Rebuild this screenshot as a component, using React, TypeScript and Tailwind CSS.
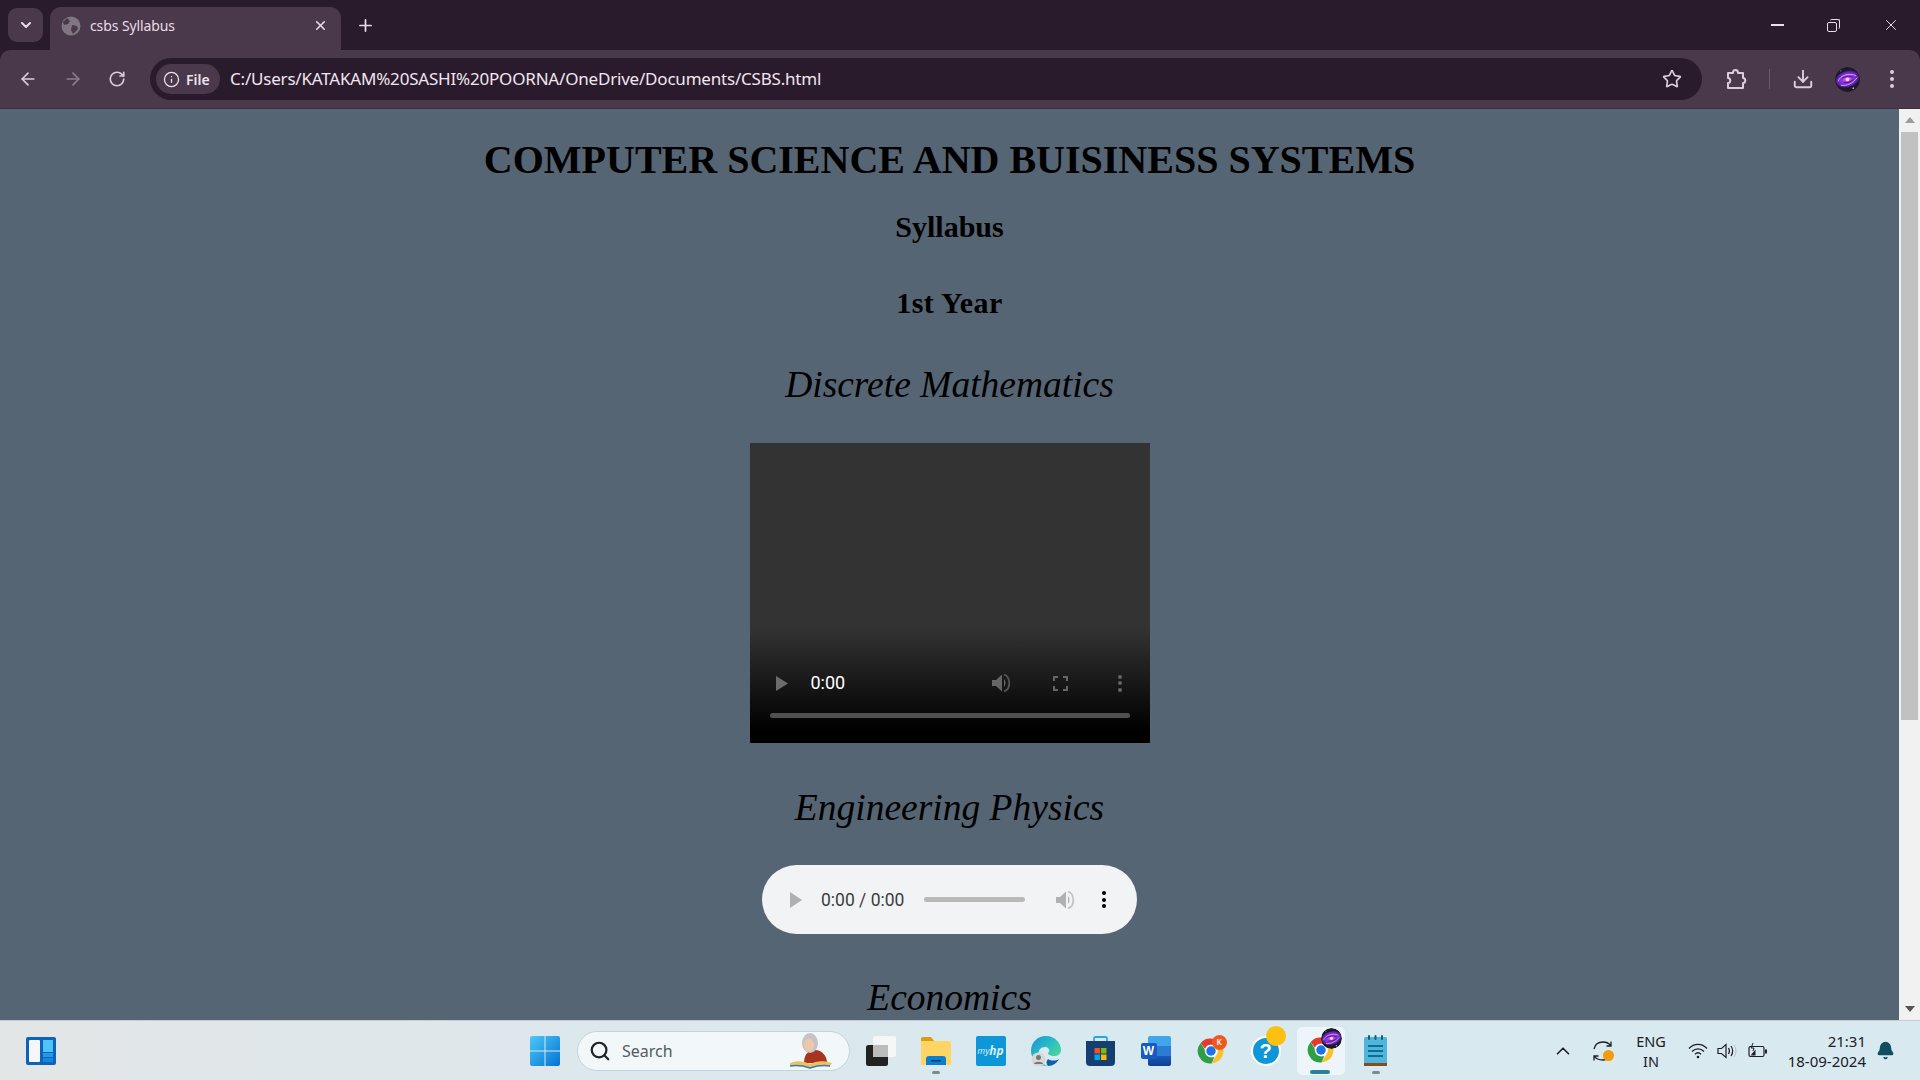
import React from "react";
import { ChevronDown, X, Plus, ArrowLeft, ArrowRight, RotateCw, Info, Star, Download, Search, ChevronUp, Bell } from "lucide-react";

function Galaxy({ size }: { size: number }) {
  return (
    <svg width={size} height={size} viewBox="0 0 26 26">
      <defs>
        <radialGradient id={"gx" + size} cx="50%" cy="50%" r="50%">
          <stop offset="0%" stopColor="#f4a3d6" />
          <stop offset="30%" stopColor="#a944ee" />
          <stop offset="80%" stopColor="#6a24c4" />
          <stop offset="100%" stopColor="#3a1c66" />
        </radialGradient>
      </defs>
      <circle cx="13" cy="13" r="13" fill="#1b1a26" />
      <ellipse cx="13" cy="12.500" rx="12.500" ry="8.500" transform="rotate(-15 13 13)" fill={"url(#gx" + size + ")"} />
      <path d="M3 15c3-7 12-9 19-6M6 19c6 1 13-2 17-8" stroke="#d9a2f8" strokeWidth="1" fill="none" />
      <path d="M7 12c3-2 8-3 12-1M9 16c3 1 7 0 10-3" stroke="#3d1480" strokeWidth="1" fill="none" />
      <circle cx="13" cy="13" r="1.800" fill="#ffd3ec" />
      <circle cx="6" cy="4" r=".7" fill="#8d8db0" />
      <circle cx="19" cy="22" r=".9" fill="#9fc0b0" />
    </svg>
  );
}

function Chrome() {
  return (
    <svg width="30" height="30" viewBox="0 0 48 48">
      <path d="M24 4a20 20 0 0 1 17.300 10H24a10 10 0 0 0-9.400 6.600L7.600 11A20 20 0 0 1 24 4z" fill="#e33b2e" />
      <path d="M41.300 14A20 20 0 0 1 25 44l8.600-15A10 10 0 0 0 32 16.500V14z" fill="#fbc02d" />
      <path d="M7.600 11l8.700 15a10 10 0 0 0 13 7.400l-4.400 10.500A20 20 0 0 1 7.600 11z" fill="#2f9e44" />
      <circle cx="24" cy="24" r="10" fill="#fff" />
      <circle cx="24" cy="24" r="7.600" fill="#1a73e8" />
    </svg>
  );
}

function Slot({ children, active, dot }: { children: React.ReactNode; active?: boolean; dot?: boolean }) {
  return (
    <div className="relative flex h-[48px] w-[55px] shrink-0 items-center justify-center">
      {active && <div className="absolute inset-y-0 left-[4px] right-[3px] rounded-[5px] bg-[#edf5fa]" />}
      {children}
      {dot && <div className="absolute bottom-[1px] left-[24px] h-[3px] w-[8px] rounded-full bg-[#7f8a90]" />}
      {active && <div className="absolute bottom-[1px] left-[17px] h-[4px] w-[20px] rounded-full bg-[#2b8296]" />}
    </div>
  );
}

function VolumeIcon({ color, wave }: { color: string; wave: string }) {
  return (
    <svg width="22" height="22" viewBox="0 0 22 22">
      <path d="M2 8h4l6-5.500v17L6 14H2z" fill={color} />
      <path d="M14 7c2 2 2 6 0 8z" fill={color} />
      <path d="M14 2.600c6 1.600 8 13.800 0 16.800" stroke={wave} strokeWidth="1.800" fill="none" />
    </svg>
  );
}

function MediaDots({ color }: { color: string }) {
  return (
    <div className="flex h-[17px] flex-col justify-between">
      <div className={"h-[4px] w-[4px] rounded-full " + color} />
      <div className={"h-[4px] w-[4px] rounded-full " + color} />
      <div className={"h-[4px] w-[4px] rounded-full " + color} />
    </div>
  );
}

function Heading({ children, cls }: { children: React.ReactNode; cls: string }) {
  return <div className={"text-center text-black " + cls}>{children}</div>;
}

export default function App() {
  const ui = "font-['Noto_Sans',sans-serif]";
  return (
    <div className={"flex h-[1080px] w-[1920px] flex-col overflow-hidden bg-[#2a1b2c] " + ui}>
      {/* tab strip */}
      <div className="flex h-[50px] shrink-0 items-end bg-[#2a1b2c] pl-[8px] text-[#e8dbe8]">
        <div className="mb-[8px] flex h-[34px] w-[35px] items-center justify-center rounded-[9px] bg-[#4a394a]">
          <ChevronDown size={16} strokeWidth={3} />
        </div>
        <div className="ml-[7px] flex h-[43px] w-[291px] items-center rounded-t-[11px] bg-[#4a394a] pb-[6px] pl-[11px] pr-[13px]">
          <svg width="20" height="20" viewBox="0 0 20 20">
            <circle cx="10" cy="10" r="9.500" fill="#7f7680" />
            <path d="M6 2l3 3-2 3-4 1-1-3zM11 9l5 1 1 3-5 5-2-4z" fill="#4a394a" />
          </svg>
          <span className="ml-[9px] flex-1 text-[14px] tracking-[-0.1px]">csbs Syllabus</span>
          <X size={15} strokeWidth={2.6} />
        </div>
        <div className="mb-[15px] ml-[14px] flex w-[20px] items-center justify-center">
          <Plus size={19} strokeWidth={2.2} />
        </div>
        <div className="ml-auto mb-[16px] flex items-center pr-[20px] text-white">
          <div className="h-[1.500px] w-[13px] bg-[#e8e0e8]" />
          <div className="relative ml-[43px] h-[13px] w-[13px]">
            <div className="absolute left-[3px] top-0 h-[10px] w-[10px] rounded-[2px] border-t border-r border-[#e8e0e8]" />
            <div className="absolute bottom-0 left-0 h-[10px] w-[10px] rounded-[2px] border border-[#e8e0e8]" />
          </div>
          <X className="ml-[42px] text-[#e8e0e8]" size={18} strokeWidth={1.300} />
        </div>
      </div>

      {/* toolbar */}
      <div className="flex h-[59px] shrink-0 items-center rounded-t-[10px] border-b border-[#3c2e3d] bg-[#4a394a] text-[#dccbdc]">
        <ArrowLeft className="ml-[18px]" size={20} strokeWidth={2} />
        <ArrowRight className="ml-[25px] text-[#8c7c8c]" size={20} strokeWidth={2} />
        <RotateCw className="ml-[25px]" size={18} strokeWidth={2.2} />
        <div className="ml-[24px] flex h-[42px] w-[1552px] items-center rounded-full bg-[#2a1b2c] pl-[6px] pr-[20px]">
          <div className="flex h-[30px] w-[64px] items-center rounded-full bg-[#4a394a] pl-[7px] text-[#eee2ee]">
            <Info size={17} strokeWidth={1.800} />
            <span className="ml-[6px] text-[14px] font-semibold">File</span>
          </div>
          <span className="ml-[10px] flex-1 text-[17px] tracking-[-0.2px] text-[#f0e6f0]">C:/Users/KATAKAM%20SASHI%20POORNA/OneDrive/Documents/CSBS.html</span>
          <Star size={20} strokeWidth={2} />
        </div>
        <svg className="ml-[23px]" width="22" height="22" viewBox="0 0 22 22" fill="none" stroke="#dccbdc" strokeWidth="2">
          <path d="M3 5h5c0-4 5-4 5 0h5v5c3 0 3 5 0 5v5H3v-5c3 0 3-5 0-5z" strokeLinejoin="round" />
        </svg>
        <div className="ml-[22px] h-[20px] w-[1px] bg-[#6b5a6b]" />
        <Download className="ml-[22px]" size={22} strokeWidth={2.100} />
        <div className="ml-[21px] flex h-[25px] w-[25px] overflow-hidden rounded-full">
          <Galaxy size={25} />
        </div>
        <div className="ml-[30px] flex h-[18px] flex-col justify-between">
          <div className="h-[4px] w-[4px] rounded-full bg-[#dccbdc]" />
          <div className="h-[4px] w-[4px] rounded-full bg-[#dccbdc]" />
          <div className="h-[4px] w-[4px] rounded-full bg-[#dccbdc]" />
        </div>
      </div>

      {/* page */}
      <div className="flex h-[911px] shrink-0 bg-[#566573]">
        <main className="flex-1 overflow-hidden font-['Liberation_Serif',serif]">
          <Heading cls="mt-[28px] text-[40px] font-bold leading-[46px]">COMPUTER SCIENCE AND BUISINESS SYSTEMS</Heading>
          <Heading cls="mt-[27px] text-[30px] font-bold leading-[34px]">Syllabus</Heading>
          <Heading cls="mt-[42px] text-[30px] font-bold leading-[34px] tracking-[0.45px]">1st Year</Heading>
          <Heading cls="mt-[43px] text-[37.500px] italic leading-[43px]">Discrete Mathematics</Heading>

          <div className="relative mx-auto mt-[37px] h-[300px] w-[400px] bg-[linear-gradient(to_bottom,#333333_0,#333333_185px,#000000_288px)] font-['Roboto',sans-serif]">
            <div className="absolute inset-x-[20px] top-[230px] flex h-[20px] items-center">
              <svg className="ml-[5px]" width="14" height="15" viewBox="0 0 14 15"><path d="M1 0l12 7.500L1 15z" fill="#6b6b6b" /></svg>
              <span className="ml-[22px] w-[177px] text-[18px] leading-[20px] text-white">0:00</span>
              <div className="ml-[2px]"><VolumeIcon color="#666666" wave="#555555" /></div>
              <svg className="ml-[41px]" width="15" height="15" viewBox="0 0 15 15" fill="none" stroke="#666666" strokeWidth="2"><path d="M1 5V1h4M10 1h4v4M14 10v4h-4M5 14H1v-4" /></svg>
              <div className="ml-[50px]"><MediaDots color="bg-[#666666]" /></div>
            </div>
            <div className="absolute inset-x-[20px] top-[270px] h-[5px] rounded-full bg-[#505050]" />
          </div>

          <Heading cls="mt-[43px] text-[37.500px] italic leading-[43px]">Engineering Physics</Heading>

          <div className="mx-auto mt-[36px] flex h-[69px] w-[375px] items-center rounded-full bg-[#f1f3f4] pl-[28px] font-['Roboto',sans-serif]">
            <svg width="12" height="16" viewBox="0 0 12 16"><path d="M0 0l12 8-12 8z" fill="#aeb0b1" /></svg>
            <span className="ml-[19px] w-[103px] text-[17.500px] leading-[20px] text-[#3b3d3f]">0:00 / 0:00</span>
            <div className="h-[5px] w-[101px] rounded-full bg-[#b9b9b9]" />
            <div className="ml-[29px]"><VolumeIcon color="#b0b1b2" wave="#c4c5c6" /></div>
            <div className="ml-[26px]"><MediaDots color="bg-black" /></div>
          </div>

          <Heading cls="mt-[42px] text-[37.500px] italic leading-[43px]">Economics</Heading>
        </main>

        <div className="flex w-[21px] shrink-0 flex-col items-center bg-[#f1f1f1]">
          <svg className="mt-[8px]" width="10" height="6" viewBox="0 0 10 6"><path d="M0 6l5-6 5 6z" fill="#9b9b9b" /></svg>
          <div className="mt-[9px] h-[588px] w-[17px] bg-[#c1c1c1]" />
          <svg className="mt-auto mb-[8px]" width="10" height="6" viewBox="0 0 10 6"><path d="M0 0l5 6 5-6z" fill="#555555" /></svg>
        </div>
      </div>

      {/* taskbar */}
      <div className="flex h-[60px] shrink-0 items-center border-t border-[#c5cbcf] bg-[linear-gradient(to_right,#e3e6e7,#dde8ec_30%,#d8e9f0_60%,#d8e9f0)] text-[#1c2024]">
        <svg className="ml-[26px]" width="30" height="28" viewBox="0 0 30 28">
          <rect width="30" height="28" rx="2" fill="#0e62b8" />
          <rect x="3" y="3" width="11" height="22" rx="1" fill="#f4f6f7" />
          <rect x="17" y="3" width="10" height="12" fill="#4fc3f7" />
          <rect x="17" y="16" width="10" height="4" fill="#1f9be8" />
          <rect x="17" y="21" width="10" height="4" fill="#1087e0" />
        </svg>

        <svg className="ml-[474px]" width="30" height="30" viewBox="0 0 30 30">
          <defs>
            <linearGradient id="w" x1="0" y1="0" x2="1" y2="1">
              <stop offset="0" stopColor="#4cc8f8" />
              <stop offset="1" stopColor="#0473d3" />
            </linearGradient>
          </defs>
          <path d="M0 2a2 2 0 0 1 2-2h12.500v14.500H0zM15.500 0H28a2 2 0 0 1 2 2v12.500H15.500zM0 15.500h14.500V30H2a2 2 0 0 1-2-2zM15.500 15.500H30V28a2 2 0 0 1-2 2H15.500z" fill="url(#w)" />
        </svg>

        <div className="ml-[17px] flex h-[40px] w-[273px] shrink-0 items-center rounded-full border border-[#c2d3dc] bg-[#f2f7fa] pl-[11px]">
          <Search size={22} strokeWidth={2.400} className="text-[#1f2327]" />
          <span className="ml-[11px] flex-1 text-[16px] text-[#555a5e]">Search</span>
          <svg className="mr-[15px]" width="46" height="36" viewBox="0 0 46 36">
            <path d="M16 30c0-8 4-13 11-13s12 6 12 13z" fill="#a8331f" />
            <ellipse cx="22" cy="10" rx="8" ry="10" fill="#c4c4c8" />
            <ellipse cx="21" cy="12" rx="5" ry="6.500" fill="#ecc8a8" />
            <path d="M2 30c8-3 14-2 20 1 6-3 13-4 22-1l-2 3c-7-1-14 0-20 2-6-2-13-3-20-2z" fill="#f0c060" />
            <path d="M2 33c7-1 14 0 20 2 6-2 13-3 20-2" stroke="#2e7fb5" strokeWidth="1.500" fill="none" />
          </svg>
        </div>

        <div className="ml-[3px] flex items-center">
          <Slot>
            <svg width="30" height="30" viewBox="0 0 30 30">
              <rect x="0" y="9" width="22" height="21" rx="2.500" fill="#222222" />
              <rect x="7" y="0" width="23" height="21" rx="2" fill="#f4f6f7" />
              <rect x="7" y="9" width="15" height="12" fill="#bcbcbc" />
            </svg>
          </Slot>
          <Slot dot>
            <svg width="30" height="28" viewBox="0 0 30 28">
              <path d="M0 2a2 2 0 0 1 2-2h8l3 4h-13z" fill="#d99e0b" />
              <path d="M0 4h28a2 2 0 0 1 2 2v22H0z" fill="#fcd564" />
              <path d="M5 28v-6a3 3 0 0 1 3-3h14a3 3 0 0 1 3 3v6z" fill="#0a7fd1" />
              <rect x="10" y="23" width="10" height="1.500" fill="#063f6e" />
            </svg>
          </Slot>
          <Slot>
            <div className="flex h-[30px] w-[30px] items-center justify-center whitespace-nowrap rounded-[2px] bg-[#0d96d8] text-[9px] italic leading-none text-[#d8f0fa]">
              my<span className="text-[12px] font-bold">hp</span>
            </div>
          </Slot>
          <Slot>
            <svg width="30" height="30" viewBox="0 0 30 30">
              <defs>
                <linearGradient id="e" x1="0" y1="0" x2="1" y2="1">
                  <stop offset="0" stopColor="#1b8ed8" />
                  <stop offset=".5" stopColor="#2cc3c0" />
                  <stop offset="1" stopColor="#6fe07a" />
                </linearGradient>
              </defs>
              <path d="M0 15C0 6 7 0 15 0c9 0 15 7 15 14 0 4-3 6-7 6-3 0-6-1-6-3 2-1 2-6-3-6-6 0-8 6-5 12 1 3 4 6 8 7C8 31 0 24 0 15z" fill="url(#e)" />
              <path d="M17 30c5 0 9-3 11-7-3 2-8 2-11 0-2 2-2 5 0 7z" fill="#0f5fa8" />
              <circle cx="7.500" cy="23.500" r="7" fill="#d7d7d7" />
              <circle cx="7.500" cy="21.500" r="2.500" fill="#777777" />
              <path d="M2.800 28c1-3 8.400-3 9.400 0z" fill="#777777" />
            </svg>
          </Slot>
          <Slot>
            <svg width="29" height="30" viewBox="0 0 29 30">
              <path d="M8 6V2.500A1.500 1.500 0 0 1 9.500 1h10A1.500 1.500 0 0 1 21 2.500V6" stroke="#2aa6e8" strokeWidth="1.800" fill="none" />
              <path d="M0 5h29v21a4 4 0 0 1-4 4H4a4 4 0 0 1-4-4z" fill="#143f70" />
              <rect x="8.500" y="12" width="5.500" height="5.500" fill="#f25022" />
              <rect x="15" y="12" width="5.500" height="5.500" fill="#7fba00" />
              <rect x="8.500" y="18.500" width="5.500" height="5.500" fill="#00a4ef" />
              <rect x="15" y="18.500" width="5.500" height="5.500" fill="#ffb900" />
            </svg>
          </Slot>
          <Slot>
            <div className="relative h-[30px] w-[30px]">
              <div className="absolute right-0 top-0 h-[30px] w-[23px] rounded-[2px] bg-[linear-gradient(to_bottom,#41a5ee_0,#41a5ee_33%,#2b7cd3_33%,#2b7cd3_66%,#185abd_66%,#103f91_100%)]" />
              <div className="absolute left-0 top-[7px] flex h-[16px] w-[16px] items-center justify-center rounded-[2px] bg-[#185abd] font-['Liberation_Sans',sans-serif] text-[12px] font-bold leading-none text-white">W</div>
            </div>
          </Slot>
          <Slot>
            <div className="relative h-[30px] w-[30px]">
              <Chrome />
              <div className="absolute -right-[1px] -top-[1px] flex h-[15px] w-[15px] items-center justify-center rounded-full bg-[#ee5a1e] text-[8px] font-semibold leading-none text-white">K</div>
            </div>
          </Slot>
          <Slot>
            <div className="relative flex h-[30px] w-[30px] items-center justify-center rounded-full border-[2px] border-white bg-[#0f96d8] font-['Liberation_Sans',sans-serif] text-[20px] font-bold leading-none text-white">
              ?
              <div className="absolute -right-[7px] -top-[12px] h-[20px] w-[20px] rounded-full bg-[#fdc010]" />
            </div>
          </Slot>
          <Slot active>
            <div className="relative -mt-[2px] h-[30px] w-[30px]">
              <Chrome />
              <div className="absolute -right-[6px] -top-[7px] h-[21px] w-[21px] overflow-hidden rounded-full"><Galaxy size={21} /></div>
            </div>
          </Slot>
          <Slot dot>
            <svg width="23" height="32" viewBox="0 0 23 32">
              <rect x="0" y="2" width="23" height="27" rx="1.500" fill="#4db6dc" />
              <rect x="0" y="28" width="23" height="3" fill="#8a4a1e" />
              <rect x="4" y="0" width="2" height="5" rx="1" fill="#1d5a78" />
              <rect x="10.500" y="0" width="2" height="5" rx="1" fill="#1d5a78" />
              <rect x="17" y="0" width="2" height="5" rx="1" fill="#1d5a78" />
              <path d="M4 11h15M4 16h15M4 21h15" stroke="#156a90" strokeWidth="2" />
            </svg>
          </Slot>
        </div>

        <div className="ml-auto flex items-center text-[14.500px] leading-[20px]">
          <div className="flex w-[40px] justify-center"><ChevronUp size={22} strokeWidth={1.800} /></div>
          <div className="relative flex w-[40px] justify-center">
            <svg width="22" height="22" viewBox="0 0 22 22" fill="none" stroke="#1c2024" strokeWidth="1.300">
              <path d="M2 9c1-5 5-7 9-7 3 0 6 1 8 4M19 1.500V6h-4.500" />
              <path d="M19 13c-1 5-5 7-8 7-4 0-7-1-9-4M2 20.500V16h4.500" />
            </svg>
            <div className="absolute left-[20px] top-[10px] h-[11px] w-[11px] rounded-full bg-[#f59a0c]" />
          </div>
          <div className="w-[56px] text-center">ENG<br />IN</div>
          <div className="flex w-[38px] justify-center">
            <svg width="20" height="16" viewBox="0 0 20 16" fill="none" stroke="#1c2024" strokeWidth="1.300">
              <path d="M1 5.500c5-5.500 13-5.500 18 0M4 8.500c3.500-3.500 8.500-3.500 12 0M7 11.300c2-2 4-2 6 0" />
              <circle cx="10" cy="14" r="1.300" fill="#1c2024" stroke="none" />
            </svg>
          </div>
          <div className="flex w-[20px] justify-center">
            <svg width="20" height="16" viewBox="0 0 20 16" fill="none" stroke="#1c2024" strokeWidth="1.200">
              <path d="M1 5.500h3.500L9 1.500v13l-4.500-4H1z" />
              <path d="M11.500 5c1.300 2 1.300 4 0 6M14 3c2 3 2 7 0 10" />
              <path d="M17 2c2.600 4 2.600 8 0 12" stroke="#c2c8cc" />
            </svg>
          </div>
          <div className="flex w-[42px] justify-center">
            <svg width="20" height="16" viewBox="0 0 20 16">
              <rect x="1" y="3.500" width="15" height="10" rx="1.500" fill="none" stroke="#1c2024" strokeWidth="1.200" />
              <rect x="17" y="6.500" width="2" height="4" fill="#1c2024" />
              <path d="M2.500 12.500l5-6v6z" fill="#1c2024" />
              <path d="M5 0l-2 5h3l-1 3" stroke="#1c2024" fill="none" />
            </svg>
          </div>
          <div className="w-[87px] whitespace-nowrap text-right text-[15px]">21:31<br />18-09-2024</div>
          <div className="flex w-[38px] justify-center"><Bell size={19} fill="#134e60" className="text-[#134e60]" /></div>
          <div className="w-[16px]" />
        </div>
      </div>
    </div>
  );
}
